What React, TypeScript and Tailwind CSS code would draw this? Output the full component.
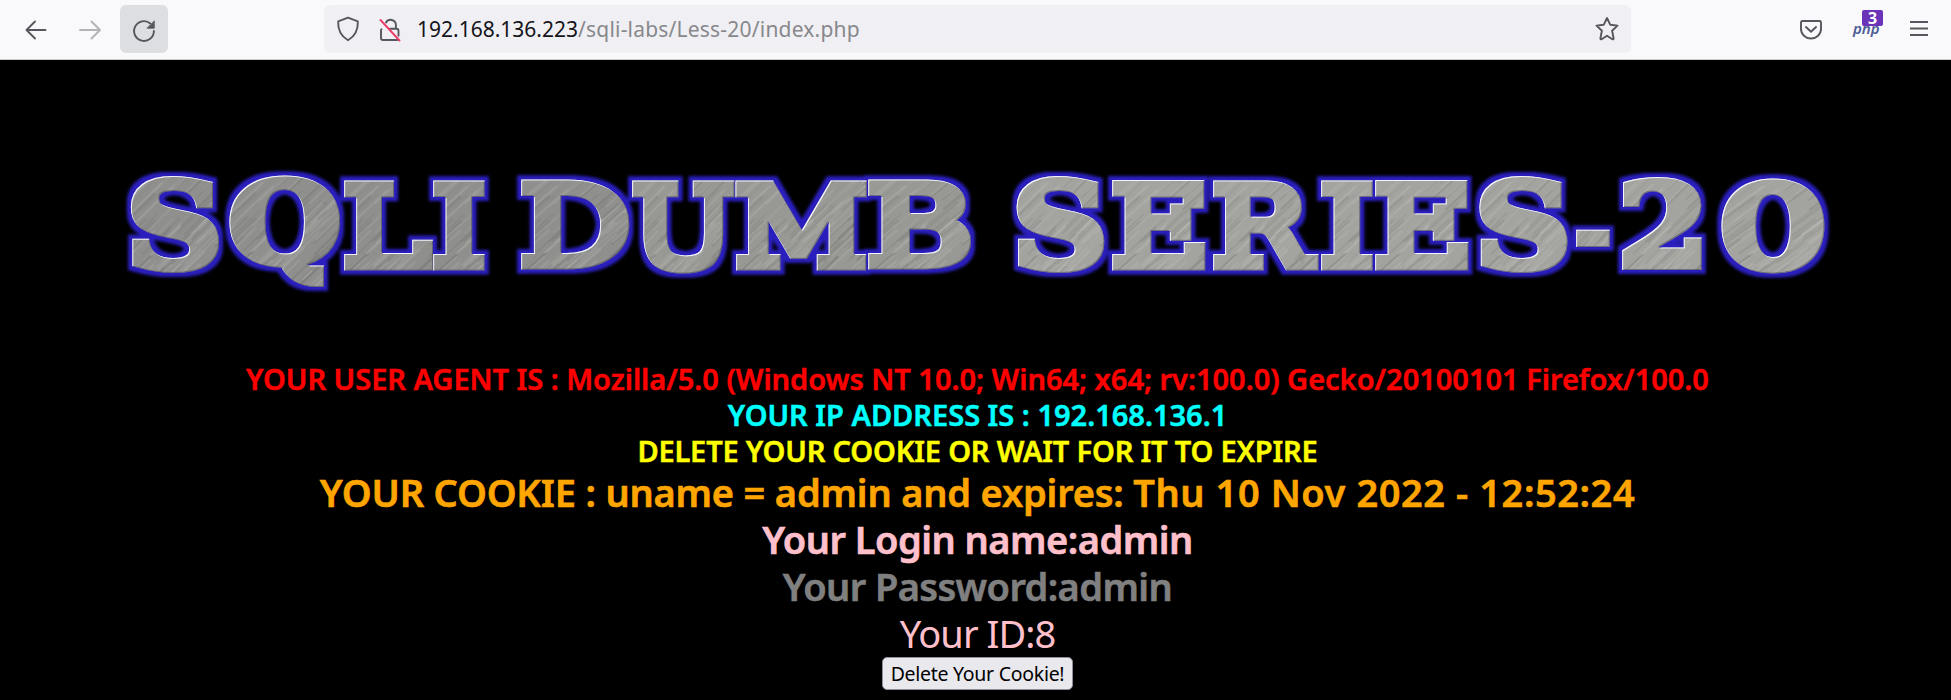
import type { ReactNode } from 'react';

type Glyph = { ch: string; x0: number; x1: number; y0: number; y1: number; tone: string; round?: boolean };

const TOP = 29;
const BASE = 120;

// Each banner letter with the box it has to fill.
const glyphs: Glyph[] = [
  { ch: 'S', x0: 130.5, x1: 220.5, y0: TOP - 4, y1: BASE + 3, tone: 'dark', round: true },
  { ch: 'Q', x0: 228, x1: 340, y0: TOP - 4, y1: 137.5, tone: 'dark', round: true },
  { ch: 'L', x0: 343, x1: 433, y0: TOP, y1: BASE, tone: 'dark' },
  { ch: 'I', x0: 432, x1: 485, y0: TOP, y1: BASE, tone: 'dark' },
  { ch: 'D', x0: 520, x1: 630, y0: TOP, y1: BASE - 1, tone: 'dark' },
  { ch: 'U', x0: 632, x1: 736, y0: TOP, y1: BASE + 3, tone: 'mid' },
  { ch: 'M', x0: 735, x1: 868, y0: TOP, y1: BASE, tone: 'mid' },
  { ch: 'B', x0: 867, x1: 973, y0: TOP, y1: BASE - 1, tone: 'mid' },
  { ch: 'S', x0: 1016, x1: 1105.5, y0: TOP - 4, y1: BASE + 3, tone: 'light', round: true },
  { ch: 'E', x0: 1111, x1: 1206, y0: TOP, y1: BASE, tone: 'light' },
  { ch: 'R', x0: 1212, x1: 1319, y0: TOP, y1: BASE, tone: 'light' },
  { ch: 'I', x0: 1320, x1: 1373, y0: TOP, y1: BASE, tone: 'light' },
  { ch: 'E', x0: 1374, x1: 1469, y0: TOP, y1: BASE, tone: 'light' },
  { ch: 'S', x0: 1479, x1: 1569, y0: TOP - 4, y1: BASE + 3, tone: 'light', round: true },
  { ch: '-', x0: 1575, x1: 1610, y0: 78, y1: 97, tone: 'light' },
  { ch: '2', x0: 1621.5, x1: 1702, y0: TOP - 2, y1: BASE, tone: 'light', round: true },
  { ch: '0', x0: 1721, x1: 1826, y0: TOP - 2, y1: BASE + 3, tone: 'light' },
];

const tones = [
  { id: 'dark', base: '#8f8f8d' },
  { id: 'mid', base: '#989894' },
  { id: 'light', base: '#a3a39f' },
];

const strokeOf = (g: Glyph) => (g.round ? 7 : 10);
const weightOf = (g: Glyph) => (g.round ? 700 : 400);

function measure(g: Glyph) {
  const ctx = document.createElement('canvas').getContext('2d')!;
  ctx.font = `${weightOf(g)} 1000px "DejaVu Serif"`;
  const m = ctx.measureText(g.ch);
  return {
    left: -m.actualBoundingBoxLeft / 10,
    right: m.actualBoundingBoxRight / 10,
    up: m.actualBoundingBoxAscent / 10,
    down: m.actualBoundingBoxDescent / 10,
  };
}

function fit(g: Glyph) {
  const b = measure(g);
  const s = strokeOf(g);
  const sx = (g.x1 - g.x0) / (b.right - b.left + s);
  const sy = (g.y1 - g.y0) / (b.up + b.down + s);
  const tx = g.x0 - (b.left - s / 2) * sx;
  const ty = g.y0 + (b.up + s / 2) * sy;
  return `translate(${tx} ${ty}) scale(${sx} ${sy})`;
}

// Deterministic brushed-metal scratches.
const scratches = (() => {
  let seed = 7;
  const rnd = () => {
    seed = (seed * 1103515245 + 12345) % 2147483648;
    return seed / 2147483648;
  };
  return Array.from({ length: 190 }, () => ({
    x: rnd() * 150 - 30,
    y: rnd() * 120,
    w: 14 + rnd() * 50,
    h: 0.6 + rnd() * 1.3,
    light: rnd() > 0.5,
    o: 0.06 + rnd() * 0.17,
  }));
})();

function Banner() {
  return (
    <svg width="1951" height="160" viewBox="0 0 1951 160" className="block" role="img" aria-label="SQLI DUMB SERIES-20">
      <defs>
        {tones.map((t) => (
          <pattern key={t.id} id={t.id} width="120" height="120" patternUnits="userSpaceOnUse" patternTransform="rotate(-48)">
            <rect width="120" height="120" fill={t.base} />
            {scratches.map((s, i) => (
              <rect key={i} x={s.x} y={s.y} width={s.w} height={s.h} fill={s.light ? '#d4d4d0' : '#444446'} opacity={s.o} />
            ))}
          </pattern>
        ))}
        <filter id="bevel" filterUnits="userSpaceOnUse" x="0" y="0" width="1951" height="160" colorInterpolationFilters="sRGB">
          <feOffset in="SourceAlpha" dx="1.4" dy="1.4" result="shift" />
          <feFlood floodColor="#f4f4ff" />
          <feComposite in2="SourceAlpha" operator="in" />
          <feComposite in2="shift" operator="out" result="edge" />
          <feOffset in="SourceAlpha" dx="-1" dy="-1" result="back" />
          <feFlood floodColor="#3a3a58" floodOpacity="0.5" />
          <feComposite in2="SourceAlpha" operator="in" />
          <feComposite in2="back" operator="out" result="shade" />
          <feMerge>
            <feMergeNode in="SourceGraphic" />
            <feMergeNode in="shade" />
            <feMergeNode in="edge" />
          </feMerge>
        </filter>
        <filter id="glow" filterUnits="userSpaceOnUse" x="0" y="0" width="1951" height="160" colorInterpolationFilters="sRGB">
          <feMorphology in="SourceAlpha" operator="dilate" radius="4" />
          <feGaussianBlur stdDeviation="1.7" result="wide" />
          <feFlood floodColor="#2a1fbe" />
          <feComposite in2="wide" operator="in" result="blue" />
          <feMerge>
            <feMergeNode in="blue" />
            <feMergeNode in="SourceGraphic" />
          </feMerge>
        </filter>
      </defs>
      <g filter="url(#glow)">
        {glyphs.map((g, i) => (
          <g key={i} filter="url(#bevel)">
            <text
              transform={fit(g)}
              fontSize="100"
              fontWeight={weightOf(g)}
              fill={`url(#${g.tone})`}
              stroke={`url(#${g.tone})`}
              strokeWidth={strokeOf(g)}
              strokeLinejoin="miter"
              strokeMiterlimit="2"
              className="font-['DejaVu_Serif',serif]"
            >
              {g.ch}
            </text>
          </g>
        ))}
      </g>
    </svg>
  );
}

function Icon({ w, h, className = '', children }: { w: number; h: number; className?: string; children: ReactNode }) {
  return (
    <svg
      width={w}
      height={h}
      viewBox={`0 0 ${w} ${h}`}
      fill="none"
      stroke="currentColor"
      strokeWidth="1.9"
      strokeLinecap="round"
      strokeLinejoin="round"
      className={`shrink-0 ${className}`}
    >
      {children}
    </svg>
  );
}

function Toolbar() {
  return (
    <header className="flex h-[60px] items-start border-b border-[#cccccf] bg-[#f9f9fb] pt-[5px] text-[#56565e]">
      <div className="flex h-12 w-[120px] items-center pl-6 pt-0.5">
        <Icon w={24} h={24}>
          <path d="M21.500 12H2.500M11 3.500 2.500 12l8.500 8.500" />
        </Icon>
        <Icon w={24} h={24} className="ml-[30px] text-[#b4b4b8]">
          <path d="M2 12h20M13.500 3.500 22 12l-8.500 8.500" />
        </Icon>
      </div>
      <div className="flex size-12 items-center justify-center rounded-md bg-[#dddee2]">
        <Icon w={24} h={24} className="mt-1">
          <path d="M21.900 12a9.900 9.900 0 1 1-3.600-7.600" />
          <path d="M22.300 2.200v7h-7z" fill="currentColor" strokeWidth="0.8" />
        </Icon>
      </div>
      <div className="ml-[156px] flex h-12 w-[1307px] items-center rounded-md bg-[#f0f0f4] pl-3 pr-[11px]">
        <Icon w={24} h={26}>
          <path d="M12 1.700 21.800 5.400c.4 6.600-1.400 14-9.800 18.900C3.600 19.400 1.800 12 2.200 5.400Z" />
        </Icon>
        <Icon w={24} h={26} className="ml-[18px]">
          <path d="M8 6.500a5.300 5.300 0 0 1 9.900 2.300v4M3.500 13.200a1.800 1.800 0 0 0-.5 1.300v7.500c0 1.200.8 2 2 2h14.500M12 12.700h6.500c1.200 0 2 .8 2 2v5" />
          <path d="M2.500 4 21.500 24.500" stroke="#ee3c66" />
        </Icon>
        <span className="ml-[15px] whitespace-pre font-['Noto_Sans',sans-serif] text-[21px] leading-[30px] text-[#15141a]">
          192.168.136.223<span className="tracking-[0.2px] text-[#88888c]">/sqli-labs/Less-20/index.php</span>
        </span>
        <Icon w={26} h={26} className="ml-auto">
          <path d="M13 2l3.200 6.700 7.300.9-5.400 5.100 1.500 7.600q.1 1.400-1.200.9L13 19.700l-5.400 3.500q-1.300.5-1.200-.9l1.500-7.600L2.500 9.600l7.300-.9Z" />
        </Icon>
      </div>
      <Icon w={24} h={22} className="ml-[168px] mt-[14px]">
        <path d="M3.500 2h17q1.500 0 1.500 1.500v6.500a10 9.500 0 0 1-20 0V3.500Q2 2 3.500 2Z" />
        <path d="M7 8l5 4.800L17 8" />
      </Icon>
      <div className="relative ml-[30px] mt-[10px] h-[26px] w-[32px] font-['Noto_Sans',sans-serif]">
        <span className="block text-[15px] font-semibold italic leading-[27px] text-[#4c5c94]">php</span>
        <span className="absolute -top-[5px] left-[9px] flex h-4 w-[21px] items-center justify-center rounded-[2px] bg-[#6a33b8] text-[16px] font-bold leading-4 text-white">
          3
        </span>
      </div>
      <Icon w={20} h={20} className="ml-[24px] mt-[13px]">
        <path d="M1 4h18M1 10.500h18M1 17h18" strokeLinecap="butt" strokeWidth="2" />
      </Icon>
    </header>
  );
}

export default function App() {
  return (
    <div className="h-[700px] w-[1951px] overflow-hidden bg-black">
      <Toolbar />
      <div className="pt-[90px]">
        <Banner />
      </div>
      <main className="flex flex-col items-center whitespace-nowrap pl-[4px] pt-[51px] text-center font-['Noto_Sans',sans-serif] font-semibold">
        <div className="text-[29px] leading-[36px] [-webkit-text-stroke:0.5px_currentColor]">
          <p className="tracking-[-0.02px] text-[#ff0000]">
            YOUR USER AGENT IS : Mozilla/5.0 (Windows NT 10.0; Win64; x64; rv:100.0) Gecko/20100101 Firefox/100.0
          </p>
          <p className="text-[#00ffff]">YOUR IP ADDRESS IS : 192.168.136.1</p>
          <p className="tracking-[-0.17px] text-[#ffff00]">DELETE YOUR COOKIE OR WAIT FOR IT TO EXPIRE</p>
        </div>
        <div className="text-[38px] leading-[47px]">
          <p className="tracking-[-0.18px] text-[#ffa500] [-webkit-text-stroke:0.6px_currentColor]">
            YOUR COOKIE : uname = admin and expires: <span className="tracking-[0.57px]">Thu 10 Nov 2022 - 12:52:24</span>
          </p>
          <p className="tracking-[-0.5px] text-[#ffc0cb] [-webkit-text-stroke:0.6px_currentColor]">Your Login name:admin</p>
          <p className="tracking-[-0.6px] text-[#808080] [-webkit-text-stroke:0.6px_currentColor]">Your Password:admin</p>
          <p className="font-normal tracking-[-0.95px] text-[#ffc0cb]">Your ID:8</p>
        </div>
        <button className="h-[33px] w-[191px] rounded-[5px] border border-[#8f8f9d] bg-[#e9e9ed] text-[19.5px] font-normal leading-[30px] tracking-[-0.28px] text-black">
          Delete Your Cookie!
        </button>
      </main>
    </div>
  );
}
